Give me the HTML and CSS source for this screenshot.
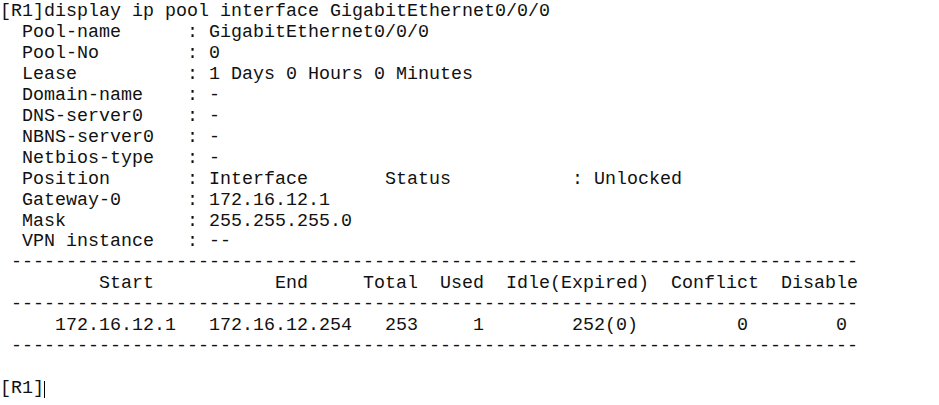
FILE: index.html
```html
<!DOCTYPE html>
<html>
<head>
<meta charset="utf-8">
<link rel="stylesheet" href="styles.css">
</head>
<body>
<pre class="term">[R1]display ip pool interface GigabitEthernet0/0/0
  Pool-name      : GigabitEthernet0/0/0
  Pool-No        : 0
  Lease          : 1 Days 0 Hours 0 Minutes
  Domain-name    : -
  DNS-server0    : -
  NBNS-server0   : -
  Netbios-type   : -
  Position       : Interface       Status           : Unlocked
  Gateway-0      : 172.16.12.1
  Mask           : 255.255.255.0
  VPN instance   : --
 -----------------------------------------------------------------------------
         Start           End     Total  Used  Idle(Expired)  Conflict  Disable
 -----------------------------------------------------------------------------
     172.16.12.1   172.16.12.254   253     1        252(0)         0        0
 -----------------------------------------------------------------------------

[R1]<span class="cursor"></span></pre>
</body>
</html>
```
FILE: styles.css
```css
html, body {
  margin: 0;
  padding: 0;
  background: #ffffff;
}
.term {
  margin: 0;
  padding: 2px 0 0 0;
  font-family: "Liberation Mono", "Courier New", monospace;
  font-size: 18.33px;
  line-height: 20.95px;
  color: #111111;
  white-space: pre;
}
.cursor {
  display: inline-block;
  width: 0;
  height: 17px;
  border-left: 1px solid #000000;
  vertical-align: -5px;
}
```
